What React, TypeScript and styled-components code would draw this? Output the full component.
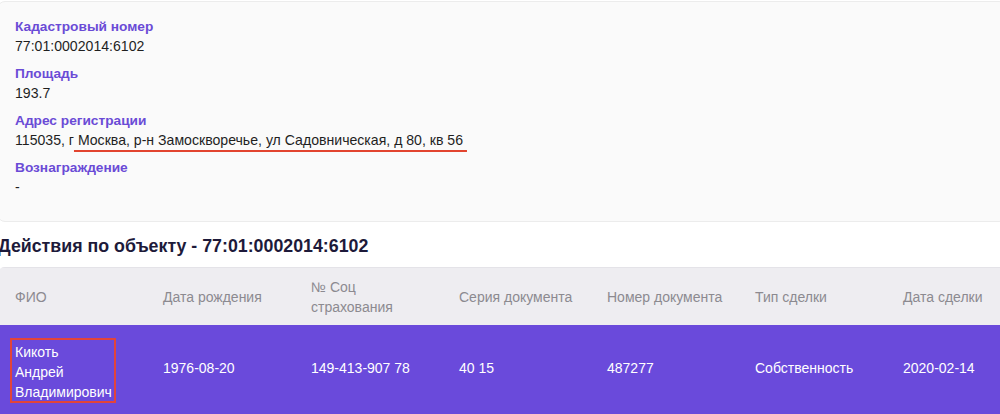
import React from "react";
import styled, { createGlobalStyle } from "styled-components";

const Global = createGlobalStyle`
  html, body { margin: 0; padding: 0; background: #ffffff; }
  body { font-family: "Liberation Sans", Arial, sans-serif; overflow: hidden; }
`;

const Page = styled.div`
  width: 1010px;
  margin-left: -3px;
  display: flex;
  flex-direction: column;
`;

const Card = styled.section`
  margin-top: 1px;
  background: #fafafa;
  border: 1px solid #ececec;
  border-radius: 8px;
  padding: 15px 17px 0;
  height: 221px;
  box-sizing: border-box;
  display: flex;
  flex-direction: column;
  gap: 8px;
`;

const Field = styled.div`
  display: flex;
  flex-direction: column;
`;

const Label = styled.div`
  color: #6a4bd6;
  font-weight: 700;
  font-size: 13.7px;
  line-height: 19px;
`;

const Value = styled.div`
  color: #1f1f1f;
  font-size: 14.1px;
  line-height: 20px;
`;

const Underlined = styled.span`
  text-decoration: underline;
  text-decoration-color: #e2442f;
  text-decoration-thickness: 2px;
  text-underline-offset: 5px;
`;

const Heading = styled.h2`
  margin: 12px 0 0 1px;
  font-size: 17.8px;
  font-weight: 700;
  color: #1d1a3a;
  line-height: 24px;
`;

const Table = styled.div`
  margin-top: 9px;
  border-radius: 8px 8px 0 0;
  overflow: hidden;
`;

const Row = styled.div<{ $head?: boolean }>`
  display: grid;
  grid-template-columns: repeat(7, 148px);
  padding-left: 18px;
  align-items: center;
  background: ${(p) => (p.$head ? "#eeedf1" : "#6a4adb")};
  color: ${(p) => (p.$head ? "#8c8a90" : "#ffffff")};
  height: ${(p) => (p.$head ? "58px" : "100px")};
  border-top: ${(p) => (p.$head ? "1px solid #e4e3e8" : "none")};
  box-sizing: border-box;
  font-size: 14px;
  line-height: 20px;
`;

const Cell = styled.div<{ $boxed?: boolean }>`
  position: relative;
  align-self: ${(p) => (p.$boxed ? "start" : "center")};
  margin-top: ${(p) => (p.$boxed ? "17px" : "-14px")};
`;

const HeadCell = styled.div``;

const RedBox = styled.div`
  position: absolute;
  left: -5px;
  top: -4px;
  width: 106px;
  height: 65px;
  border: 2px solid #e2443a;
  box-sizing: border-box;
`;

const headers = [
  "ФИО",
  "Дата рождения",
  "№ Соц\nстрахования",
  "Серия документа",
  "Номер документа",
  "Тип сделки",
  "Дата сделки",
];

export default function App() {
  return (
    <>
      <Global />
      <Page>
        <Card>
          <Field>
            <Label>Кадастровый номер</Label>
            <Value>77:01:0002014:6102</Value>
          </Field>
          <Field>
            <Label>Площадь</Label>
            <Value>193.7</Value>
          </Field>
          <Field>
            <Label>Адрес регистрации</Label>
            <Value>
              115035, г<Underlined>{"\u00a0Москва, р-н Замоскворечье, ул Садовническая, д 80, кв 56\u00a0"}</Underlined>
            </Value>
          </Field>
          <Field>
            <Label>Вознаграждение</Label>
            <Value>-</Value>
          </Field>
        </Card>
        <Heading>Действия по объекту - 77:01:0002014:6102</Heading>
        <Table>
          <Row $head>
            {headers.map((h) => (
              <HeadCell key={h}>
                {h.split("\n").map((l) => (
                  <div key={l}>{l}</div>
                ))}
              </HeadCell>
            ))}
          </Row>
          <Row>
            <Cell $boxed>
              <div>Кикоть</div>
              <div>Андрей</div>
              <div>Владимирович</div>
              <RedBox />
            </Cell>
            <Cell>1976-08-20</Cell>
            <Cell>149-413-907 78</Cell>
            <Cell>40 15</Cell>
            <Cell>487277</Cell>
            <Cell>Собственность</Cell>
            <Cell>2020-02-14</Cell>
          </Row>
        </Table>
      </Page>
    </>
  );
}
